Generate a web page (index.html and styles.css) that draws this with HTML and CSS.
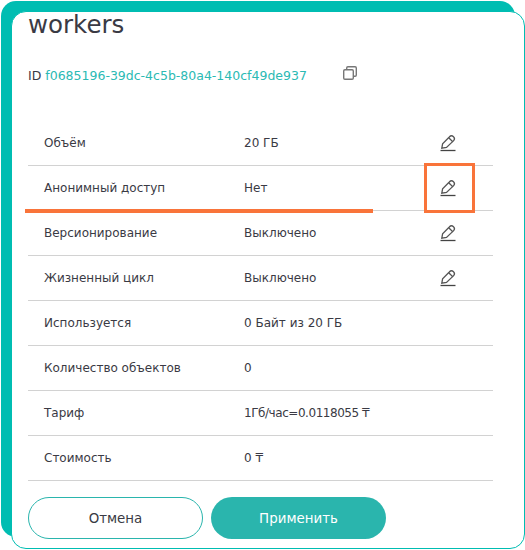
FILE: index.html
```html
<!doctype html>
<html lang="en">
    <head>
        <meta charset="UTF-8" />
        <title>workers</title>
        <link rel="stylesheet" href="styles.css">
    </head>
    <body>
        <div class="card-shell">
            <div class="card">
                <h1 class="title">workers</h1>
                <div class="bucket-id">
                    <span>ID</span>
                    <span class="bucket-id-value">f0685196-39dc-4c5b-80a4-140cf49de937</span>
                    <svg class="copy-icon" width="16" height="16" viewBox="0 0 16 16" fill="none" stroke="#777" stroke-width="1.4">
                        <rect x="1.7" y="4.7" width="9.6" height="9.6" rx="1.2" />
                        <path d="M4.7 4.5V2.900c0-.7.5-1.200 1.200-1.200h7.200c.7 0 1.200.5 1.200 1.200v7.200c0 .7-.5 1.200-1.200 1.200h-1.600" />
                    </svg>
                </div>

                <div class="props">
                    <div class="prop">
                        <span class="prop-name">Объём</span>
                        <span class="prop-value">20 ГБ</span>
                        <span class="prop-edit">
                            <svg width="16" height="18" viewBox="0 0 16 18" fill="none" stroke="#555" stroke-width="1.3">
                                <path d="M1.800 14.200 2.600 9.900 9.300 3c1.200-1.300 3-1.400 4.200-.3 1.200 1.200 1.100 3-.1 4.200L6.500 13.400z" />
                                <path d="M8.700 3.800l4.100 3.900" />
                                <path d="M.5 16.500h15" stroke="#444" />
                            </svg>
                        </span>
                    </div>
                    <div class="prop">
                        <span class="prop-name">Анонимный доступ</span>
                        <span class="prop-value">Нет</span>
                        <span class="prop-edit">
                            <svg width="16" height="18" viewBox="0 0 16 18" fill="none" stroke="#555" stroke-width="1.3">
                                <path d="M1.800 14.200 2.600 9.900 9.300 3c1.200-1.300 3-1.400 4.200-.3 1.200 1.200 1.100 3-.1 4.200L6.500 13.400z" />
                                <path d="M8.700 3.800l4.100 3.900" />
                                <path d="M.5 16.500h15" stroke="#444" />
                            </svg>
                        </span>
                    </div>
                    <div class="prop">
                        <span class="prop-name">Версионирование</span>
                        <span class="prop-value">Выключено</span>
                        <span class="prop-edit">
                            <svg width="16" height="18" viewBox="0 0 16 18" fill="none" stroke="#555" stroke-width="1.3">
                                <path d="M1.800 14.200 2.600 9.900 9.300 3c1.200-1.300 3-1.400 4.200-.3 1.200 1.200 1.100 3-.1 4.200L6.500 13.400z" />
                                <path d="M8.700 3.800l4.100 3.900" />
                                <path d="M.5 16.500h15" stroke="#444" />
                            </svg>
                        </span>
                    </div>
                    <div class="prop">
                        <span class="prop-name">Жизненный цикл</span>
                        <span class="prop-value">Выключено</span>
                        <span class="prop-edit">
                            <svg width="16" height="18" viewBox="0 0 16 18" fill="none" stroke="#555" stroke-width="1.3">
                                <path d="M1.800 14.200 2.600 9.900 9.300 3c1.200-1.300 3-1.400 4.200-.3 1.200 1.200 1.100 3-.1 4.200L6.500 13.400z" />
                                <path d="M8.700 3.800l4.100 3.900" />
                                <path d="M.5 16.500h15" stroke="#444" />
                            </svg>
                        </span>
                    </div>
                    <div class="prop">
                        <span class="prop-name">Используется</span>
                        <span class="prop-value">0 Байт из 20 ГБ</span>
                    </div>
                    <div class="prop">
                        <span class="prop-name">Количество объектов</span>
                        <span class="prop-value">0</span>
                    </div>
                    <div class="prop">
                        <span class="prop-name">Тариф</span>
                        <span class="prop-value prop-value-rate">1Гб/час=0.0118055 ₸</span>
                    </div>
                    <div class="prop">
                        <span class="prop-name">Стоимость</span>
                        <span class="prop-value">0 ₸</span>
                    </div>
                </div>

                <div class="actions">
                    <button class="btn btn-cancel">Отмена</button>
                    <button class="btn btn-apply">Применить</button>
                </div>
            </div>

            <div class="mark-line"></div>
            <div class="mark-box"></div>
        </div>
    </body>
</html>
```

FILE: styles.css
```css
body {
    margin: 1px 0 0 1px;
    font-family: "DejaVu Sans", sans-serif;
    color: #3a3a44;
}

.card-shell {
    position: relative;
    width: 524px;
    height: 548px;
    box-sizing: border-box;
    padding: 10px 0 0 10px;
}

.card-shell::before {
    content: "";
    position: absolute;
    top: 0;
    left: 0;
    right: 10px;
    bottom: 12px;
    background: #00bdb2;
    border-radius: 15px;
}

.card {
    position: relative;
    height: 100%;
    box-sizing: border-box;
    background: #fff;
    border: 1px solid #00bdb2;
    border-radius: 15px;
    padding: 0 31px 0 16px;
}

.title {
    margin: 0;
    font-size: 24.5px;
    font-weight: 400;
    line-height: 26px;
    color: #3a3a44;
}

.bucket-id {
    display: flex;
    align-items: center;
    margin-top: 28px;
    height: 18px;
    font-size: 12.5px;
    gap: 4px;
}

.bucket-id-value {
    color: #2bbab4;
}

.copy-icon {
    margin-left: 31px;
    margin-top: -4px;
}

.props {
    margin-top: 37px;
}

.prop {
    display: flex;
    align-items: center;
    height: 45px;
    box-sizing: border-box;
    border-bottom: 1px solid #d2d2d2;
    padding-left: 16px;
    font-size: 12px;
}

.prop-name {
    width: 200px;
}

.prop-value {
    flex: 1;
}

.prop-value-rate {
    letter-spacing: -0.45px;
}

.prop-edit {
    display: flex;
    margin-right: 37px;
}

.actions {
    display: flex;
    gap: 8px;
    margin-top: 16px;
}

.btn {
    width: 175px;
    height: 42px;
    border-radius: 21px;
    font-family: "DejaVu Sans", sans-serif;
    font-size: 13.4px;
    cursor: pointer;
}

.btn-cancel {
    background: #fff;
    border: 1px solid #2ab5ad;
    color: #3a3a44;
}

.btn-apply {
    background: #2ab5ad;
    border: none;
    color: #fff;
}

/* annotations drawn over the screenshot */
.mark-line {
    position: absolute;
    left: 24px;
    top: 208px;
    width: 348px;
    height: 4px;
    background: #f9743a;
}

.mark-box {
    position: absolute;
    left: 423px;
    top: 162px;
    width: 51px;
    height: 50px;
    box-sizing: border-box;
    border: 3px solid #f9743a;
}
```
